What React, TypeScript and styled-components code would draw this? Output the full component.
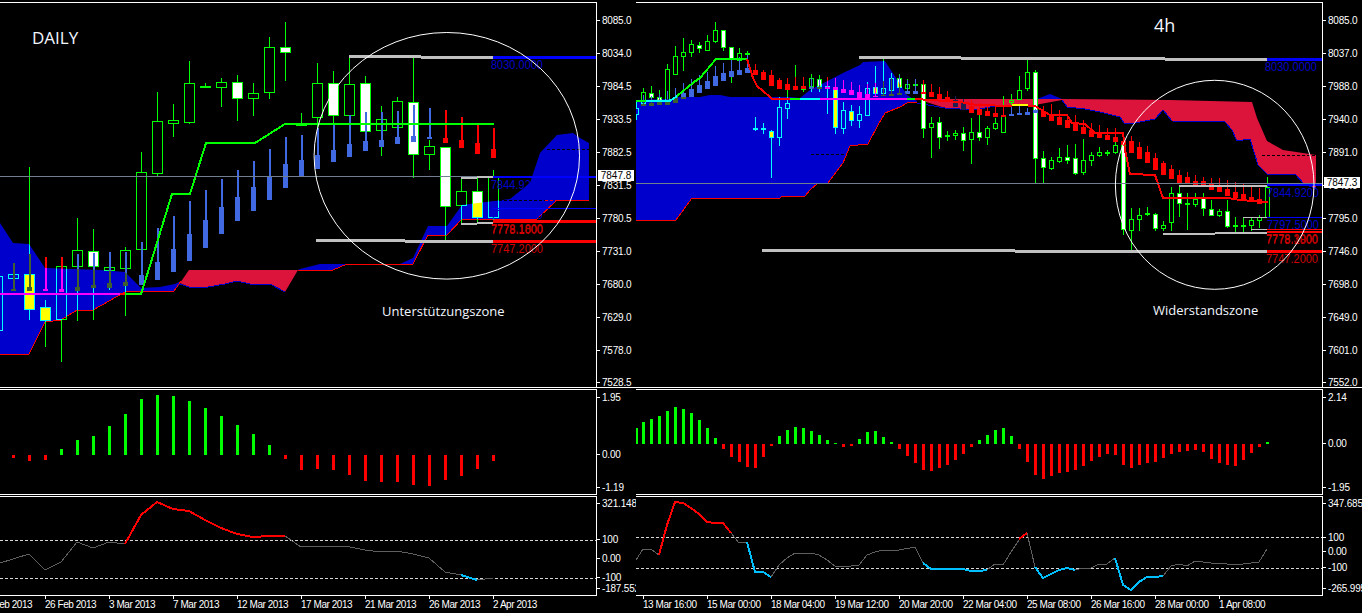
import React from 'react';
import styled, { createGlobalStyle } from 'styled-components';

const Global = createGlobalStyle`
  html, body { margin: 0; background: #000; }
`;

type Pt = [number, number];
// x, high, low, body top, body bottom, white body
type Bar = [number, number, number, number, number, number?];
// x, wick top, body top, body bottom
type Ghost = [number, number, number, number];
// x1, x2, y, colour, thickness
type Level = [number, number, number, string, number];
// x, baseline, text, colour
type Note = [number, number, string, string];
// colour, thickness, points
type Trace = [string, number, Pt[]];
// x, top of the bar (or bottom when it hangs under the zero line)
type Hist = [number, number];
type Tick = [string, number];

const GREEN = '#00ff00';
const RED = '#ff0000';
const CYAN = '#00ffff';
const SKY = '#00bfff';
const MAGENTA = '#ff00ff';
const ROYAL = '#4169e1';
const OLIVE = '#3f5f2f';
const CLOUD = '#0000cd';
const CRIMSON = '#dc143c';
const SILVER = '#c0c0c0';
const SLATE = '#708090';
const TRACE = '#5f5f5f';

/* ---------- daily chart ---------- */

const dailyCloud: Pt[][] = [
  [[0, 223], [13, 243], [29, 244], [45, 268], [100, 270], [125, 272], [141, 288], [160, 287], [175, 284], [181, 281], [181, 283], [174, 291], [141, 291], [125, 292], [93, 310], [77, 310], [61, 320], [45, 322], [29, 354], [0, 354]],
  [[285, 292], [298, 270], [300, 269], [320, 264], [400, 264], [413, 258], [428, 226], [447, 226], [462, 205], [510, 199], [530, 183], [540, 153], [557, 135], [573, 133], [580, 138], [589, 143], [589, 200], [557, 200], [537, 219], [462, 219], [447, 235], [428, 235], [413, 264], [347, 264], [333, 270], [298, 270]],
];
const dailyCrimson: Pt[] = [[180, 283], [189, 270], [298, 270], [285, 292], [270, 284], [250, 284], [237, 281], [225, 284], [208, 287], [189, 287]];
const dailyEdges: Trace[] = [
  [RED, 1, [[0, 354], [29, 354], [45, 322], [61, 320], [77, 310], [93, 310], [125, 292], [141, 291], [174, 291], [181, 281]]],
  [RED, 1, [[298, 270], [333, 270], [347, 264], [413, 264], [428, 235], [447, 235], [462, 219], [537, 219], [557, 200], [589, 200]]],
  [CLOUD, 1, [[180, 284], [189, 287], [208, 287], [225, 284], [237, 281], [250, 284], [270, 284], [285, 292]]],
];
const dailyBars: Bar[] = [
  [-3, 250, 345, 276, 330], [13, 263, 291, 274, 278], [29, 167, 320, 274, 309, 1], [45, 300, 347, 307, 320, 1],
  [61, 258, 362, 266, 319], [77, 218, 321, 250, 266], [93, 229, 320, 251, 266, 1], [109, 252, 290, 267, 270],
  [125, 247, 316, 250, 268], [141, 152, 250, 172, 249], [157, 92, 177, 121, 173], [173, 104, 137, 120, 123],
  [189, 61, 124, 83, 122], [205, 83, 88, 86, 87], [221, 78, 107, 82, 87], [237, 75, 121, 82, 98, 1],
  [253, 83, 116, 93, 98], [269, 37, 99, 47, 92], [285, 22, 81, 47, 52, 1], [301, 113, 126, 123, 125],
  [317, 63, 128, 83, 117], [333, 71, 130, 83, 115, 1], [349, 57, 140, 84, 115], [365, 76, 132, 83, 131, 1],
  [381, 106, 156, 119, 130], [397, 97, 135, 101, 127], [413, 57, 178, 102, 154, 1], [429, 140, 170, 146, 154],
  [445, 147, 240, 147, 206, 1], [461, 178, 224, 191, 205], [477, 178, 224, 191, 217, 1], [493, 170, 222, 177, 217],
];
const dailyGhostsBlue: Ghost[] = [
  [13, 263, 289, 291], [29, 254, 287, 291], [77, 254, 287, 291], [93, 253, 285, 288], [109, 252, 283, 288], [125, 252, 282, 286],
  [141, 242, 275, 285], [157, 228, 262, 280], [173, 216, 249, 272], [189, 201, 234, 261], [205, 190, 220, 248], [221, 179, 207, 234],
  [237, 170, 197, 221], [253, 161, 187, 211], [269, 149, 176, 200], [285, 137, 164, 188], [301, 135, 160, 176], [317, 128, 155, 169],
  [333, 125, 150, 162], [349, 115, 144, 157], [365, 112, 141, 151], [381, 112, 140, 147], [397, 111, 137, 144], [413, 105, 136, 142], [429, 108, 137, 139],
];
const dailyGhostsRed: Ghost[] = [
  [45, 257, 289, 291], [61, 257, 289, 292], [445, 110, 138, 143], [461, 117, 140, 148], [477, 125, 143, 154], [493, 128, 149, 158],
];
const dailyLines: Trace[] = [
  [MAGENTA, 2, [[0, 294], [120, 294]]],
  [RED, 2, [[120, 294], [125, 294]]],
  [GREEN, 2, [[125, 294], [141, 294], [143, 288], [172, 194], [190, 194], [206, 143], [255, 143], [285, 124], [494, 124]]],
];
const dailyLevels: Level[] = [
  [0, 596, 176, SLATE, 1],
  [349, 421, 56, SILVER, 3], [421, 493, 57, SILVER, 3], [493, 596, 57, '#0000ff', 3],
  [461, 477, 178, SILVER, 2], [477, 493, 177, SILVER, 2], [493, 596, 176.5, '#0000ff', 2],
  [493, 596, 208, '#0000ff', 1],
  [461, 477, 223.5, SILVER, 2], [477, 493, 222.5, SILVER, 2], [493, 596, 221, RED, 3],
  [316, 405, 240, SILVER, 3], [405, 493, 241, SILVER, 3], [493, 596, 241.5, RED, 3],
];
const dailyNotes: Note[] = [
  [491, 69, '8030.0000', '#0000cd'], [491, 189, '7844.9200', '#0000cd'], [491, 219, '7797.5000', '#0000cd'],
  [491, 233, '7778.1800', '#d00000'], [491, 234, '7778.1000', '#d00000'], [491, 253, '7747.2000', '#d00000'],
];
const dailyDashes: Level[] = [[547, 589, 149.5, '#000', 1], [484, 545, 200.5, '#000', 1], [545, 589, 200.5, RED, 1]];
const dailyCci: Trace[] = [
  [TRACE, 1, [[0, 563], [13, 559], [29, 554], [45, 570], [61, 562], [77, 542], [93, 548], [109, 542], [125, 544]]],
  [RED, 2, [[125, 544], [141, 515], [157, 502], [173, 509], [189, 511], [205, 520], [221, 528], [237, 534], [253, 537], [269, 536], [285, 536]]],
  [TRACE, 1, [[285, 536], [301, 547], [317, 546], [345, 546], [365, 550], [381, 552], [397, 551], [413, 554], [429, 558], [445, 572], [461, 575]]],
  [SKY, 2, [[461, 575], [477, 580]]],
  [TRACE, 1, [[477, 580], [493, 578]]],
];
const dailyHist: Hist[] = [
  [13, 458], [29, 461], [45, 460], [61, 449], [77, 440], [93, 436], [109, 426], [125, 414], [141, 399], [157, 395], [173, 396],
  [189, 401], [205, 408], [221, 416], [237, 425], [253, 434], [269, 445], [285, 459], [301, 470], [317, 469], [333, 470], [349, 475],
  [365, 481], [381, 482], [397, 482], [413, 485], [429, 486], [445, 480], [461, 476], [477, 469], [493, 461],
];

/* ---------- 4h chart ---------- */

const h4Cloud: Pt[][] = [
  [[636, 100], [670, 99], [680, 97], [700, 97], [710, 95], [720, 95], [730, 97], [790, 97], [800, 98], [810, 90], [843, 73], [860, 65], [863, 62], [885, 61], [907, 95], [917, 101], [917, 102], [907, 103], [900, 107], [885, 113], [878, 125], [868, 144], [858, 145], [850, 146], [843, 163], [828, 183], [817, 184], [810, 190], [805, 196], [782, 196], [780, 198], [692, 198], [676, 220], [636, 220]],
  [[1037, 99], [1050, 94], [1062, 99]],
];
const h4Crimson: Pt[] = [[917, 99], [1062, 99], [1170, 100], [1252, 102], [1257, 118], [1267, 141], [1283, 150], [1316, 155], [1316, 188], [1305, 185], [1295, 174], [1267, 174], [1258, 165], [1250, 139], [1237, 141], [1232, 130], [1225, 122], [1172, 121], [1163, 110], [1155, 119], [1135, 123], [1124, 123], [1120, 117], [1100, 112], [1085, 109], [1067, 107], [1062, 100], [1035, 105], [1000, 105], [975, 110], [945, 108]];
const h4Edges: Trace[] = [
  [RED, 1, [[636, 220], [676, 220], [692, 198], [780, 198], [782, 196], [805, 196], [810, 190], [817, 184], [828, 183], [843, 163], [850, 146], [858, 145], [868, 144], [878, 125], [885, 113], [900, 107], [907, 103], [917, 102]]],
  [CLOUD, 1, [[917, 103], [945, 108], [975, 110], [1000, 105], [1035, 105]]],
  [CLOUD, 1, [[1062, 100], [1067, 107], [1085, 109], [1100, 112], [1120, 117], [1124, 123], [1135, 123], [1155, 119], [1163, 110], [1172, 121], [1225, 122], [1232, 130], [1237, 141], [1250, 139], [1258, 165], [1267, 174], [1295, 174], [1305, 185], [1316, 188]]],
];
const h4Bars: Bar[] = [
  [636, 100, 120, 108, 114], [643, 88, 106, 92, 103], [651, 86, 100, 93, 97, 1], [659, 90, 104, 97, 100, 1], [667, 64, 103, 69, 100],
  [675, 46, 74, 56, 74], [683, 38, 71, 52, 56], [691, 40, 57, 44, 52], [699, 42, 53, 45, 48, 1], [707, 35, 50, 41, 50],
  [715, 22, 43, 30, 41], [723, 30, 51, 30, 47, 1], [731, 47, 83, 47, 59, 1], [739, 48, 65, 53, 60], [747, 51, 55, 53, 54],
  [755, 117, 131, 128, 129], [763, 123, 134, 128, 129], [771, 130, 178, 131, 137, 1], [779, 97, 146, 107, 137], [787, 80, 119, 103, 108],
  [795, 65, 90, 88, 89], [803, 85, 92, 87, 89], [811, 74, 92, 78, 86], [819, 75, 92, 79, 86, 1], [827, 77, 114, 86, 87],
  [835, 86, 134, 88, 127, 1], [843, 102, 134, 110, 128], [851, 105, 126, 111, 120, 1], [859, 106, 128, 114, 120], [867, 82, 116, 88, 115],
  [875, 66, 96, 87, 93, 1], [883, 59, 96, 88, 93], [891, 73, 92, 78, 90], [899, 74, 90, 78, 87, 1], [907, 79, 92, 84, 88],
  [915, 79, 88, 84, 85], [923, 82, 138, 84, 128, 1], [931, 117, 158, 123, 127], [939, 117, 149, 122, 137, 1], [947, 131, 141, 135, 136],
  [955, 130, 140, 133, 135], [963, 127, 151, 133, 140, 1], [971, 118, 164, 132, 139], [979, 115, 141, 132, 137, 1], [987, 126, 145, 128, 137],
  [995, 118, 130, 123, 128], [1003, 96, 133, 116, 132], [1011, 94, 108, 100, 102], [1019, 76, 100, 90, 99], [1027, 60, 91, 72, 88],
  [1035, 70, 183, 72, 158, 1], [1043, 151, 184, 158, 167, 1], [1051, 157, 170, 160, 168], [1059, 148, 163, 157, 161], [1067, 145, 164, 157, 160, 1],
  [1075, 144, 175, 158, 173, 1], [1083, 139, 175, 160, 172], [1091, 152, 166, 155, 160], [1099, 147, 157, 152, 155], [1107, 150, 156, 152, 153],
  [1115, 138, 154, 145, 152], [1123, 145, 235, 145, 229, 1], [1131, 208, 250, 219, 230], [1139, 208, 231, 215, 219], [1147, 207, 216, 213, 214],
  [1155, 213, 231, 214, 228, 1], [1163, 221, 231, 225, 228], [1171, 187, 231, 193, 222], [1179, 185, 217, 193, 203, 1], [1187, 193, 230, 203, 204],
  [1195, 193, 207, 199, 204], [1203, 193, 216, 198, 208, 1], [1211, 200, 216, 209, 215, 1], [1219, 209, 217, 211, 215], [1227, 200, 228, 211, 226, 1],
  [1235, 217, 233, 225, 226], [1243, 217, 232, 225, 226], [1251, 217, 231, 220, 225], [1259, 215, 228, 217, 220], [1267, 177, 218, 187, 217],
];
const h4GhostsBlue: Ghost[] = [
  [643, 95, 104, 106], [651, 96, 103, 106], [659, 94, 102, 105], [667, 91, 101, 105], [675, 88, 97, 103],
  [683, 83, 93, 99], [691, 79, 89, 97], [699, 75, 85, 93], [707, 72, 81, 89], [715, 66, 76, 86], [723, 63, 73, 81],
  [731, 59, 71, 77], [739, 57, 70, 75], [747, 55, 68, 73], [811, 78, 87, 89], [819, 79, 87, 89], [883, 81, 95, 96],
  [891, 78, 94, 96], [899, 75, 93, 95], [907, 80, 91, 94], [915, 79, 91, 94],
  [1011, 106, 114, 116], [1019, 106, 113, 115], [1027, 108, 112, 115], [1035, 109, 110, 113],
];
const h4GhostsRed: Ghost[] = [
  [755, 64, 70, 75], [763, 70, 72, 80], [771, 70, 75, 86], [779, 78, 80, 89], [787, 78, 84, 90], [795, 77, 86, 90], [803, 77, 86, 89],
  [827, 77, 87, 89], [835, 78, 87, 90], [843, 80, 89, 93], [851, 82, 90, 95], [859, 85, 92, 98], [867, 84, 94, 98], [875, 83, 96, 97],
  [923, 80, 92, 94], [931, 84, 92, 97], [939, 87, 94, 99], [947, 91, 97, 102], [971, 100, 106, 113], [979, 103, 109, 115],
  [987, 105, 111, 116], [995, 107, 113, 117], [1003, 105, 115, 117], [1043, 106, 111, 117], [1051, 104, 114, 121], [1059, 110, 117, 125],
  [1067, 116, 120, 128], [1075, 115, 123, 131], [1083, 120, 127, 134], [1091, 123, 130, 137], [1099, 125, 133, 138], [1107, 128, 135, 140],
  [1115, 128, 137, 142], [1123, 132, 141, 145], [1131, 136, 141, 153], [1139, 142, 147, 159], [1147, 146, 152, 163], [1155, 153, 158, 170],
  [1163, 161, 163, 175], [1171, 165, 169, 179], [1179, 170, 175, 184], [1187, 172, 177, 184], [1195, 175, 181, 185], [1203, 177, 181, 186],
  [1211, 178, 183, 190], [1219, 178, 186, 192], [1227, 180, 189, 196], [1235, 182, 192, 198], [1243, 184, 194, 200], [1251, 186, 197, 202], [1259, 188, 199, 204],
];
const h4GhostsDark: Ghost[] = [[955, 96, 100, 107], [963, 99, 103, 110]];
const h4Lines: Trace[] = [
  [GREEN, 2, [[636, 101], [646, 101]]],
  [CYAN, 2, [[646, 101], [670, 101], [677, 96]]],
  [GREEN, 2, [[677, 96], [694, 82], [700, 78], [716, 59], [747, 59]]],
  [RED, 2, [[747, 59], [753, 78], [757, 86], [770, 97], [772, 99], [790, 99]]],
  [GREEN, 2, [[790, 99], [800, 99]]],
  [CYAN, 2, [[800, 99], [820, 99]]],
  [MAGENTA, 2, [[820, 99], [907, 99]]],
  [GREEN, 2, [[907, 99], [915, 99]]],
  [RED, 2, [[915, 99], [960, 102], [977, 105], [1012, 106]]],
  ['#ffff00', 2, [[1012, 105], [1028, 105]]],
  [RED, 2, [[1028, 106], [1035, 106], [1050, 115], [1067, 115], [1072, 123], [1085, 124], [1095, 133], [1123, 133], [1125, 150], [1130, 174], [1155, 175], [1163, 198], [1228, 198], [1240, 200], [1268, 202]]],
];
const h4Levels: Level[] = [
  [636, 1322, 183, SLATE, 1],
  [859, 961, 57, SILVER, 3], [961, 1165, 58, SILVER, 3], [1165, 1267, 59, SILVER, 3], [1267, 1322, 59, '#0000ff', 3],
  [1179, 1267, 185.5, SILVER, 2], [1267, 1322, 185, '#0000ff', 2],
  [1243, 1267, 217.5, SILVER, 1], [1267, 1322, 217.5, '#0000ff', 1], [1251, 1267, 229.5, SILVER, 1],
  [1163, 1215, 233.5, SILVER, 2], [1215, 1267, 232.5, SILVER, 2], [1267, 1322, 229.5, RED, 1], [1267, 1322, 232, RED, 2],
  [762, 1015, 250, SILVER, 3], [1015, 1267, 251, SILVER, 3], [1267, 1322, 251.5, RED, 3],
];
const h4Notes: Note[] = [
  [1265, 71, '8030.0000', '#0000cd'], [1267, 197, '7844.9200', '#0000cd'], [1267, 229, '7797.5000', '#0000cd'],
  [1266, 243, '7778.3000', '#d00000'], [1266, 244, '7778.1800', '#d00000'], [1266, 263, '7747.2000', '#d00000'],
];
const h4Dashes: Level[] = [[811, 845, 154.5, '#000', 1], [1120, 1128, 155, '#000', 1], [1262, 1316, 155, '#000', 1]];
const h4Cci: Trace[] = [
  [TRACE, 1, [[636, 560], [643, 549], [651, 549], [659, 555]]],
  [RED, 2, [[659, 555], [667, 525], [675, 502], [683, 503], [691, 508], [699, 514], [707, 522], [715, 523], [723, 523], [731, 533]]],
  [TRACE, 1, [[731, 533], [739, 543], [747, 542]]],
  [SKY, 2, [[747, 542], [755, 572], [763, 572], [771, 577]]],
  [TRACE, 1, [[771, 577], [779, 565], [787, 558], [795, 553], [803, 554], [811, 553], [819, 555], [827, 560], [835, 566], [851, 566], [859, 565], [867, 555], [875, 552], [883, 550], [899, 550], [915, 547], [923, 563]]],
  [SKY, 2, [[923, 563], [931, 569], [963, 569], [971, 571], [979, 571], [987, 570]]],
  [TRACE, 1, [[987, 570], [995, 564], [1003, 565], [1011, 552], [1019, 540]]],
  [RED, 2, [[1019, 539], [1027, 533]]],
  [TRACE, 1, [[1027, 533], [1035, 567]]],
  [SKY, 2, [[1035, 567], [1043, 578], [1051, 574], [1059, 570], [1067, 568], [1075, 570]]],
  [TRACE, 1, [[1075, 570], [1083, 568], [1091, 568], [1099, 564], [1107, 564], [1115, 558]]],
  [SKY, 2, [[1115, 558], [1123, 585], [1131, 590], [1139, 582], [1147, 577], [1155, 577], [1163, 576]]],
  [TRACE, 1, [[1163, 576], [1171, 566], [1179, 564], [1187, 566], [1195, 561], [1203, 562], [1211, 563], [1219, 563], [1227, 564], [1235, 565], [1243, 564], [1251, 563], [1259, 562], [1267, 549]]],
];
const h4HistTops = [
  422, 419, 416, 411, 407, 409, 413, 420, 428, 438, 449, 457, 462, 467, 468, 457, 446, 436, 430, 427, 428, 431, 435, 440, 443,
  447, 446, 439, 432, 431, 437, 442, 449, 456, 463, 470, 471, 468, 465, 460, 454, 447, 440, 435, 430, 428, 436, 449, 462, 475,
  479, 476, 473, 472, 470, 466, 461, 457, 454, 455, 465, 468, 465, 463, 462, 458, 454, 452, 451, 450, 452, 459, 463, 465, 466,
  460, 453, 447, 442,
];
const h4Hist: Hist[] = h4HistTops.map((y, i) => [643 + i * 8, y]);

/* ---------- page ---------- */

const Page = styled.div`
  display: flex;
  width: 1362px;
  height: 613px;
  overflow: hidden;
  background: #000;
  color: #fff;
  font-family: 'Liberation Sans', Arial, sans-serif;
`;
const ChartWindow = styled.div<{ $width: number }>`
  display: flex;
  flex-direction: column;
  flex: none;
  width: ${(p) => p.$width}px;
  padding-top: 2px;
`;
const MainPane = styled.div`
  display: flex;
  height: 386px;
  box-sizing: border-box;
  border-bottom: 1px solid #fff;
`;
const SubPane = styled.div<{ $height: number }>`
  display: flex;
  height: ${(p) => p.$height}px;
  margin-top: 1px;
`;
const Plot = styled.div`
  position: relative;
  flex: 1;
  min-width: 0;
  border-top: 1px solid #fff;
  border-right: 1px solid #fff;
`;
const SubPlot = styled(Plot)`
  border-bottom: 1px solid #fff;
`;
const Drawing = styled.svg`
  display: block;
`;
const Axis = styled.div`
  position: relative;
  display: flex;
  flex-direction: column;
  flex: none;
  width: 39px;
  overflow: hidden;
`;
const AxisTick = styled.div<{ $gap: number }>`
  display: flex;
  align-items: center;
  flex: none;
  gap: 2px;
  height: 10px;
  margin-top: ${(p) => p.$gap}px;
  font-size: 10px;
  letter-spacing: -0.2px;
  white-space: nowrap;
  &::before {
    content: '';
    flex: none;
    width: 3px;
    height: 1px;
    background: #fff;
  }
`;
const PriceTag = styled.div<{ $top: number }>`
  position: absolute;
  top: ${(p) => p.$top}px;
  left: 1px;
  width: 36px;
  height: 11px;
  background: #fff;
  color: #000;
  font-size: 10px;
  line-height: 11px;
  text-align: center;
`;
const ChartCaption = styled.div<{ $x: number; $y: number; $size: number }>`
  position: absolute;
  left: ${(p) => p.$x}px;
  top: ${(p) => p.$y}px;
  color: #f2f6ff;
  font-family: 'Open Sans', sans-serif;
  font-size: ${(p) => p.$size}px;
  line-height: 1;
  white-space: nowrap;
`;
const TimeRow = styled.div<{ $start: number }>`
  display: flex;
  flex: none;
  height: 17px;
  overflow: hidden;
  margin-left: ${(p) => p.$start}px;
`;
const TimeCell = styled.div`
  position: relative;
  flex: none;
  width: 64px;
  padding-top: 3px;
  font-size: 10px;
  letter-spacing: -0.45px;
  line-height: 12px;
  white-space: nowrap;
  &::before {
    content: '';
    position: absolute;
    top: 0;
    left: 0;
    width: 1px;
    height: 3px;
    background: #fff;
  }
`;
const NoteText = styled.text`
  font-family: 'Liberation Sans', Arial, sans-serif;
  font-size: 12px;
`;

const pts = (list: Pt[]) => list.map((p) => p.join(',')).join(' ');

function Candles({ bars, half, line, solid }: { bars: Bar[]; half: number; line: string; solid: string }) {
  return (
    <g shapeRendering="crispEdges">
      {bars.map(([x, hi, lo, top, bot, white]) => (
        <g key={x}>
          <line x1={x + 0.5} x2={x + 0.5} y1={hi} y2={top} stroke={line} />
          <line x1={x + 0.5} x2={x + 0.5} y1={bot} y2={lo} stroke={line} />
          <rect x={x - half + 0.5} y={top + 0.5} width={half * 2} height={bot - top} stroke={line} fill={white ? solid : 'none'} />
        </g>
      ))}
    </g>
  );
}

function Ghosts({ bars, wick, body, color }: { bars: Ghost[]; wick: number; body: number; color: string }) {
  return (
    <g shapeRendering="crispEdges" fill={color}>
      {bars.map(([x, hi, top, bot]) => (
        <g key={x}>
          <rect x={x + 0.5 - wick / 2} y={hi} width={wick} height={bot - hi} />
          <rect x={x + 0.5 - body / 2} y={top} width={body} height={bot - top} />
        </g>
      ))}
    </g>
  );
}

function Traces({ traces }: { traces: Trace[] }) {
  return (
    <>
      {traces.map(([color, width, list], i) => (
        <polyline key={i} points={pts(list)} fill="none" stroke={color} strokeWidth={width} shapeRendering="crispEdges" />
      ))}
    </>
  );
}

function Levels({ levels, dash }: { levels: Level[]; dash?: string }) {
  return (
    <g shapeRendering="crispEdges">
      {levels.map(([x1, x2, y, color, width]) => (
        <line key={`${x1}-${y}`} x1={x1} x2={x2} y1={y} y2={y} stroke={color} strokeWidth={width} strokeDasharray={dash} />
      ))}
    </g>
  );
}

type MainProps = {
  id: string;
  x: number;
  width: number;
  cloud: Pt[][];
  crimson: Pt[];
  edges: Trace[];
  bars: Bar[];
  half: number;
  blue: Ghost[];
  red: Ghost[];
  dark?: Ghost[];
  wick: number;
  body: number;
  lines: Trace[];
  levels: Level[];
  dashes: Level[];
  notes: Note[];
  circle: { cx: number; cy: number; rx: number; ry: number };
};

function MainChart(p: MainProps) {
  const clip = `${p.id}-cloud`;
  return (
    <Drawing width={p.width} height={384} viewBox={`${p.x} 3 ${p.width} 384`}>
      <defs>
        <clipPath id={clip}>
          {p.cloud.map((c, i) => (
            <polygon key={i} points={pts(c)} />
          ))}
        </clipPath>
      </defs>
      {p.cloud.map((c, i) => (
        <polygon key={i} points={pts(c)} fill={CLOUD} />
      ))}
      <polygon points={pts(p.crimson)} fill={CRIMSON} />
      <Traces traces={p.edges} />
      <Levels levels={p.dashes} dash="3 2" />
      <Candles bars={p.bars} half={p.half} line={GREEN} solid="#fff" />
      <g clipPath={`url(#${clip})`}>
        <Candles bars={p.bars} half={p.half} line={CYAN} solid="#ffff00" />
      </g>
      <Ghosts bars={p.blue} wick={p.wick} body={p.body} color={ROYAL} />
      <Ghosts bars={p.red} wick={p.wick} body={p.body} color={RED} />
      {p.dark && <Ghosts bars={p.dark} wick={p.wick} body={p.body} color="#1e1e50" />}
      <g clipPath={`url(#${clip})`}>
        <Ghosts bars={p.blue} wick={p.wick} body={p.body} color={OLIVE} />
        <Ghosts bars={p.red} wick={p.wick} body={p.body} color={MAGENTA} />
      </g>
      <Traces traces={p.lines} />
      <Levels levels={p.levels} />
      {p.notes.map(([x, y, text, color]) => (
        <NoteText key={text} x={x} y={y} fill={color} textLength={52} lengthAdjust="spacingAndGlyphs">
          {text}
        </NoteText>
      ))}
      <ellipse {...p.circle} fill="none" stroke="#fff" />
    </Drawing>
  );
}

function Histogram({ x, width, zero, bars, rising }: { x: number; width: number; zero: number; bars: Hist[]; rising: (y: number) => boolean }) {
  return (
    <Drawing width={width} height={104} viewBox={`${x} 390 ${width} 104`}>
      <g shapeRendering="crispEdges">
        {bars.map(([bx, y]) => (
          <rect
            key={bx}
            x={bx - 1}
            y={Math.min(y, zero)}
            width={3}
            height={Math.abs(y - zero)}
            fill={rising(y) ? GREEN : RED}
          />
        ))}
      </g>
    </Drawing>
  );
}

function Cci({ x, width, bands, traces }: { x: number; width: number; bands: [number, number]; traces: Trace[] }) {
  return (
    <Drawing width={width} height={98} viewBox={`${x} 497 ${width} 98`}>
      <Levels levels={bands.map((y): Level => [x, x + width, y + 0.5, '#d8d8d8', 1])} dash="3 2" />
      <Traces traces={traces} />
    </Drawing>
  );
}

function Ticks({ ticks, top }: { ticks: Tick[]; top: number }) {
  let cursor = top;
  return (
    <>
      {ticks.map(([label, y]) => {
        const gap = y - 5 - cursor;
        cursor = y + 5;
        return (
          <AxisTick key={label} $gap={gap}>
            {label}
          </AxisTick>
        );
      })}
    </>
  );
}

function TimeScale({ start, labels }: { start: number; labels: string[] }) {
  return (
    <TimeRow $start={start}>
      {labels.map((l) => (
        <TimeCell key={l}>{l}</TimeCell>
      ))}
    </TimeRow>
  );
}

const dailyAxis: Tick[] = [
  ['8085.0', 20.5], ['8034.0', 53.5], ['7984.5', 86.5], ['7933.5', 119.5], ['7882.5', 152.5], ['7831.5', 185.5],
  ['7780.5', 218.5], ['7731.0', 251.5], ['7680.0', 284.5], ['7629.0', 317.5], ['7578.0', 350.5], ['7528.5', 382.5],
];
const h4Axis: Tick[] = [
  ['8085.0', 20.5], ['8037.0', 53.5], ['7988.0', 86.5], ['7940.0', 119.5], ['7891.0', 152.5], ['7843.0', 185.5],
  ['7795.0', 218.5], ['7746.0', 251.5], ['7698.0', 284.5], ['7649.0', 317.5], ['7601.0', 350.5], ['7552.0', 382.5],
];

export default function App() {
  return (
    <Page>
      <Global />
      <ChartWindow $width={636}>
        <MainPane>
          <Plot>
            <MainChart
              id="daily"
              x={0}
              width={596}
              cloud={dailyCloud}
              crimson={dailyCrimson}
              edges={dailyEdges}
              bars={dailyBars}
              half={5}
              blue={dailyGhostsBlue}
              red={dailyGhostsRed}
              wick={2}
              body={5}
              lines={dailyLines}
              levels={dailyLevels}
              dashes={dailyDashes}
              notes={dailyNotes}
              circle={{ cx: 446.8, cy: 155.8, rx: 132.7, ry: 123.3 }}
            />
            <ChartCaption $x={32} $y={26} $size={17}>DAILY</ChartCaption>
            <ChartCaption $x={382} $y={302} $size={13}>Unterstützungszone</ChartCaption>
          </Plot>
          <Axis>
            <Ticks ticks={dailyAxis} top={2} />
            <PriceTag $top={168}>7847.8</PriceTag>
          </Axis>
        </MainPane>
        <SubPane $height={106}>
          <SubPlot>
            <Histogram x={0} width={596} zero={455} bars={dailyHist} rising={(y) => y < 455} />
          </SubPlot>
          <Axis>
            <Ticks ticks={[['1.95', 397], ['0.00', 454.5], ['-1.19', 487.5]]} top={389} />
          </Axis>
        </SubPane>
        <SubPane $height={100}>
          <SubPlot>
            <Cci x={0} width={596} bands={[540, 578]} traces={dailyCci} />
          </SubPlot>
          <Axis>
            <Ticks ticks={[['321.1486', 503], ['100', 539.5], ['0.00', 558.5], ['-100', 577.5], ['-187.552', 588.5]]} top={496} />
          </Axis>
        </SubPane>
        <TimeScale
          start={-19}
          labels={['21 Feb 2013', '26 Feb 2013', '3 Mar 2013', '7 Mar 2013', '12 Mar 2013', '17 Mar 2013', '21 Mar 2013', '26 Mar 2013', '2 Apr 2013']}
        />
      </ChartWindow>
      <ChartWindow $width={726}>
        <MainPane>
          <Plot>
            <MainChart
              id="h4"
              x={636}
              width={686}
              cloud={h4Cloud}
              crimson={h4Crimson}
              edges={h4Edges}
              bars={h4Bars}
              half={2}
              blue={h4GhostsBlue}
              red={h4GhostsRed}
              dark={h4GhostsDark}
              wick={1}
              body={5}
              lines={h4Lines}
              levels={h4Levels}
              dashes={h4Dashes}
              notes={h4Notes}
              circle={{ cx: 1214.7, cy: 184.8, rx: 99.3, ry: 104.5 }}
            />
            <ChartCaption $x={518} $y={13} $size={18}>4h</ChartCaption>
            <ChartCaption $x={517} $y={301} $size={13}>Widerstandszone</ChartCaption>
          </Plot>
          <Axis>
            <Ticks ticks={h4Axis} top={2} />
            <PriceTag $top={175}>7847.3</PriceTag>
          </Axis>
        </MainPane>
        <SubPane $height={106}>
          <SubPlot>
            <Histogram x={636} width={686} zero={444} bars={[[636, 428], ...h4Hist]} rising={(y) => y < 444} />
          </SubPlot>
          <Axis>
            <Ticks ticks={[['2.14', 397], ['0.00', 443.5], ['-1.95', 487.5]]} top={389} />
          </Axis>
        </SubPane>
        <SubPane $height={100}>
          <SubPlot>
            <Cci x={636} width={686} bands={[537, 568]} traces={h4Cci} />
          </SubPlot>
          <Axis>
            <Ticks ticks={[['347.6854', 503], ['100', 537], ['0.00', 551.5], ['-100', 567], ['-265.995', 588]]} top={496} />
          </Axis>
        </SubPane>
        <TimeScale
          start={7}
          labels={['13 Mar 16:00', '15 Mar 00:00', '18 Mar 04:00', '19 Mar 12:00', '20 Mar 20:00', '22 Mar 04:00', '25 Mar 08:00', '26 Mar 16:00', '28 Mar 00:00', '1 Apr 08:00']}
        />
      </ChartWindow>
    </Page>
  );
}
